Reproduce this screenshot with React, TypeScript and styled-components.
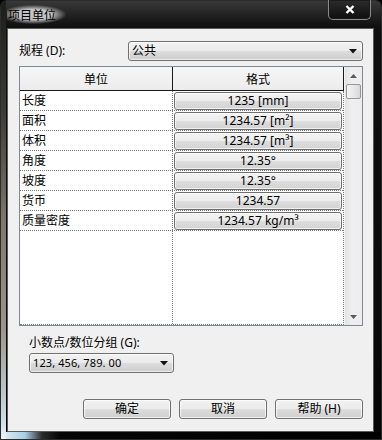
import styled, { createGlobalStyle } from "styled-components";

const GlobalStyle = createGlobalStyle`
  html, body {
    margin: 0;
    padding: 0;
    background: #000;
  }
  body {
    font-family: "Noto Sans", "Noto Sans CJK SC", sans-serif;
    font-size: 12px;
    color: #000;
  }
`;

const units = [
  { name: "长度", format: "1235 [mm]" },
  { name: "面积", format: "1234.57 [m²]" },
  { name: "体积", format: "1234.57 [m³]" },
  { name: "角度", format: "12.35°" },
  { name: "坡度", format: "12.35°" },
  { name: "货币", format: "1234.57" },
  { name: "质量密度", format: "1234.57 kg/m³" },
];

const DownArrow = () => (
  <svg width="8" height="5" viewBox="0 0 8 5">
    <path d="M0 0 H8 L4 4.5 Z" fill="#111" />
  </svg>
);

export default function App() {
  return (
    <>
      <GlobalStyle />
      <Window>
        <TitleBar>
          <Title>项目单位</Title>
          <CloseButton>
            <svg width="10" height="9" viewBox="0 0 10 9">
              <path d="M1.5 1 L8.5 8 M8.5 1 L1.5 8" stroke="#fff" strokeWidth="2.4" />
            </svg>
          </CloseButton>
        </TitleBar>
        <Client>
          <TopRow>
            <Label>规程 (D):</Label>
            <Combo>
              <span>公共</span>
              <DownArrow />
            </Combo>
          </TopRow>

          <Table>
            <Grid>
              <Header>
                <HeadCell>单位</HeadCell>
                <HeadCell>格式</HeadCell>
              </Header>
              <Body>
                {units.map((u) => (
                  <Row key={u.name}>
                    <NameCell>{u.name}</NameCell>
                    <FormatCell>
                      <FormatButton>{u.format}</FormatButton>
                    </FormatCell>
                  </Row>
                ))}
                <Filler>
                  <NameCell />
                  <div />
                </Filler>
              </Body>
            </Grid>
            <ScrollBar>
              <ScrollArrow>
                <svg width="7" height="4" viewBox="0 0 7 4">
                  <path d="M0 4 H7 L3.5 0 Z" fill="#5a5a5a" />
                </svg>
              </ScrollArrow>
              <Thumb />
              <Track />
              <ScrollArrow>
                <svg width="7" height="4" viewBox="0 0 7 4">
                  <path d="M0 0 H7 L3.5 4 Z" fill="#5a5a5a" />
                </svg>
              </ScrollArrow>
            </ScrollBar>
          </Table>

          <GroupLabel>小数点/数位分组 (G):</GroupLabel>
          <Combo $width={145} $indent={10}>
            <DigitText>123, 456, 789. 00</DigitText>
            <DownArrow />
          </Combo>

          <Buttons>
            <DialogButton>确定</DialogButton>
            <DialogButton>取消</DialogButton>
            <DialogButton>帮助 (H)</DialogButton>
          </Buttons>
        </Client>
      </Window>
    </>
  );
}

const Window = styled.div`
  width: 382px;
  height: 440px;
  box-sizing: border-box;
  display: flex;
  flex-direction: column;
  padding: 0 8px 8px 7px;
  border-radius: 7px 7px 0 0;
  background:
    linear-gradient(to bottom, #1c1c1c 0, #3c3a36 25%, #7d776c 50%, #9c968a 75%, #c8dbe6 95%, #eef5f9 100%) left top / 6px 100% no-repeat,
    linear-gradient(to right, #e6f0f6 0, #a8cfe4 25px, #2a2a2a 42px, #050505 60px, #000 100%) left bottom / 100% 8px no-repeat,
    linear-gradient(to bottom, #3a3a3a 0, #101010 26px, #060606 100%);
  box-shadow: inset 0 0 0 1px #2c2c2c;
`;

const TitleBar = styled.div`
  height: 28px;
  display: flex;
  justify-content: space-between;
  align-items: flex-start;
  padding: 0 3px 0 0;
`;

const Title = styled.div`
  margin-top: 5px;
  padding: 2px 10px 2px 1px;
  font-family: "Noto Sans CJK SC", sans-serif;
  font-size: 12px;
  line-height: 15px;
  color: #000;
  background: radial-gradient(ellipse at 45% 50%, rgba(205, 205, 205, 0.95) 38%, rgba(200, 200, 200, 0) 72%);
`;

const CloseButton = styled.div`
  width: 43px;
  height: 20px;
  box-sizing: border-box;
  display: flex;
  align-items: center;
  justify-content: center;
  border: 1px solid #8a8a8a;
  border-top: none;
  border-radius: 0 0 5px 5px;
  background: linear-gradient(to bottom, #2c2c2c, #0e0e0e);
  box-shadow: inset 0 0 0 1px #1a1a1a;
`;

const Client = styled.div`
  flex: 1;
  display: flex;
  flex-direction: column;
  background: #f0f0f0;
  border: 1px solid #5a5a5a;
  padding: 12px 10px 12px 11px;
  font-family: "Noto Sans", "Noto Sans CJK SC", sans-serif;
`;

const TopRow = styled.div`
  display: grid;
  grid-template-columns: 109px 1fr;
  align-items: center;
  height: 20px;
`;

const Label = styled.div`
  font-size: 12px;
  line-height: 16px;
`;

const Combo = styled.div<{ $width?: number; $indent?: number }>`
  width: ${(p) => (p.$width ? `${p.$width}px` : "auto")};
  margin-left: ${(p) => p.$indent ?? 0}px;
  height: 20px;
  box-sizing: border-box;
  display: flex;
  align-items: center;
  justify-content: space-between;
  padding: 0 5px 0 3px;
  border: 1px solid #707070;
  border-radius: 3px;
  background: linear-gradient(to bottom, #f2f2f2 0, #ebebeb 50%, #dddddd 50%, #cfcfcf 100%);
  box-shadow: inset 0 0 0 1px rgba(255, 255, 255, 0.6);
  font-size: 12px;
  line-height: 16px;
`;

const DigitText = styled.span`
  font-size: 11px;
  letter-spacing: 0.1px;
`;

const Table = styled.div`
  margin-top: 5px;
  height: 260px;
  box-sizing: border-box;
  display: flex;
  border: 1px solid #828790;
  background: #fff;
`;

const Grid = styled.div`
  flex: 1;
  display: flex;
  flex-direction: column;
`;

const Header = styled.div`
  display: grid;
  grid-template-columns: 153px 1fr;
  height: 24px;
  box-sizing: border-box;
  border-bottom: 1px solid #1a1a1a;
  background: linear-gradient(to bottom, #f6f6f6, #ececec);
`;

const HeadCell = styled.div`
  display: flex;
  align-items: center;
  justify-content: center;
  border-right: 1px solid #1a1a1a;
  font-size: 12px;
`;

const Body = styled.div`
  flex: 1;
  display: flex;
  flex-direction: column;
  border-right: 1px dotted #7a7a7a;
  border-bottom: 1px dotted #7a7a7a;
`;

const Row = styled.div`
  display: grid;
  grid-template-columns: 153px 1fr;
  height: 20px;
  box-sizing: border-box;
  border-bottom: 1px dotted #7a7a7a;
`;

const Filler = styled.div`
  flex: 1;
  display: grid;
  grid-template-columns: 153px 1fr;
`;

const NameCell = styled.div`
  border-right: 1px dotted #7a7a7a;
  padding-left: 2px;
  font-size: 12px;
  line-height: 19px;
`;

const FormatCell = styled.div`
  padding: 1px 1px 0 1px;
`;

const FormatButton = styled.div`
  height: 18px;
  box-sizing: border-box;
  display: flex;
  align-items: center;
  justify-content: center;
  border: 1px solid #6e6e6e;
  border-radius: 3px;
  background: linear-gradient(to bottom, #f4f4f4 0, #ececec 50%, #dedede 50%, #d2d2d2 100%);
  box-shadow: inset 0 0 0 1px rgba(255, 255, 255, 0.7);
  font-size: 12px;
  line-height: 16px;
`;

const ScrollBar = styled.div`
  width: 17px;
  display: flex;
  flex-direction: column;
  background: linear-gradient(to right, #e3e3e3, #efefef 40%, #ececec);
  border-left: 1px solid #f4f4f4;
`;

const ScrollArrow = styled.div`
  height: 17px;
  display: flex;
  align-items: center;
  justify-content: center;
`;

const Thumb = styled.div`
  height: 15px;
  margin: 0 1px;
  box-sizing: border-box;
  border: 1px solid #979797;
  border-radius: 2px;
  background: linear-gradient(to right, #f3f3f3, #e8e8e8 50%, #d8d8d8);
`;

const Track = styled.div`
  flex: 1;
`;

const GroupLabel = styled.div`
  margin: 9px 0 2px 10px;
  font-size: 12px;
  line-height: 16px;
`;

const Buttons = styled.div`
  margin-top: auto;
  display: flex;
  justify-content: flex-end;
  gap: 8px;
`;

const DialogButton = styled.div`
  width: 88px;
  height: 20px;
  box-sizing: border-box;
  display: flex;
  align-items: center;
  justify-content: center;
  border: 1px solid #707070;
  border-radius: 3px;
  background: linear-gradient(to bottom, #f2f2f2 0, #ebebeb 50%, #dddddd 50%, #cfcfcf 100%);
  box-shadow: inset 0 0 0 1px rgba(255, 255, 255, 0.7);
  font-size: 12px;
  line-height: 16px;
`;
